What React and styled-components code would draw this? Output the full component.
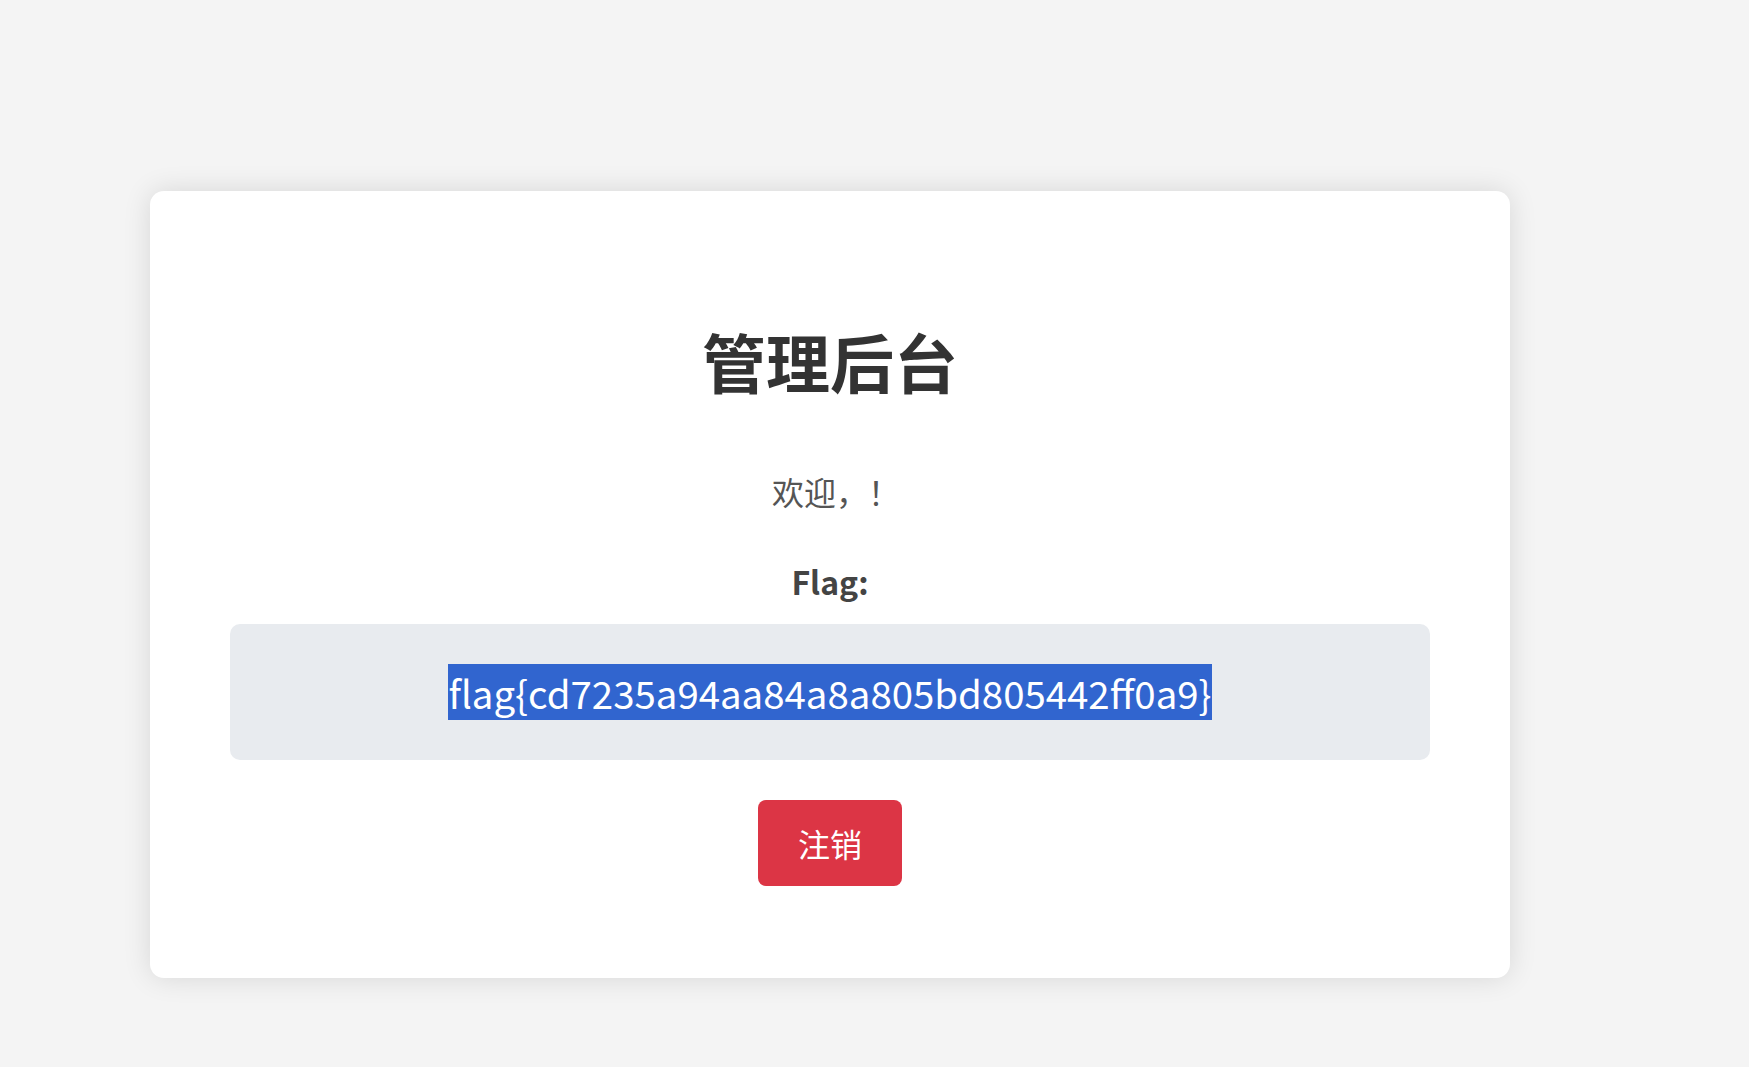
import React from "react";
import styled, { createGlobalStyle } from "styled-components";

const GlobalStyle = createGlobalStyle`
  html, body {
    margin: 0;
    padding: 0;
    background: #f4f4f4;
    font-family: "Noto Sans CJK SC", "Noto Sans", sans-serif;
  }
`;

const Page = styled.div`
  min-height: 1067px;
  box-sizing: border-box;
  padding: 191px 0 40px 150px;
`;

const Card = styled.div`
  width: 1360px;
  box-sizing: border-box;
  padding: 80px 80px 92px;
  background: #ffffff;
  border-radius: 14px;
  box-shadow: 0 0 28px rgba(0, 0, 0, 0.12);
  text-align: center;
`;

const Title = styled.h1`
  margin: 43px 0 62px;
  font-size: 64px;
  font-weight: 700;
  color: #333333;
`;

const Welcome = styled.p`
  margin: 0 0 44px;
  padding-left: 12px;
  font-size: 32px;
  color: #555555;
`;

const FlagLabel = styled.p`
  margin: 0 0 20px;
  font-size: 32px;
  font-weight: 700;
  color: #444444;
`;

const FlagBox = styled.div`
  padding: 40px;
  background: #e8ebef;
  border-radius: 10px;
  font-size: 38.4px;
  color: #333333;
`;

const Selected = styled.span`
  background: #3165cf;
  color: #ffffff;
`;

const LogoutButton = styled.button`
  margin-top: 40px;
  padding: 20px 40px;
  border: none;
  border-radius: 8px;
  background: #dc3545;
  color: #ffffff;
  font-family: inherit;
  font-size: 32px;
  cursor: pointer;
`;

export default function App() {
  return (
    <>
      <GlobalStyle />
      <Page>
        <Card>
          <Title>管理后台</Title>
          <Welcome>欢迎，！</Welcome>
          <FlagLabel>Flag:</FlagLabel>
          <FlagBox>
            <Selected>flag{"{"}cd7235a94aa84a8a805bd805442ff0a9{"}"}</Selected>
          </FlagBox>
          <LogoutButton>注销</LogoutButton>
        </Card>
      </Page>
    </>
  );
}
